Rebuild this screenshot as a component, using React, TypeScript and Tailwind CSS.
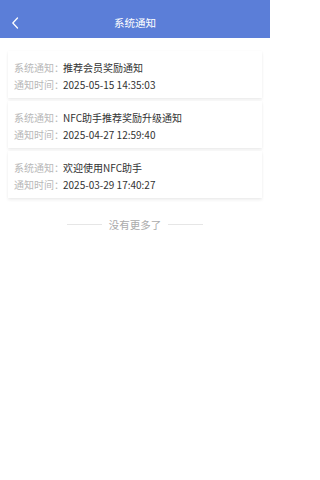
import React from "react";

const items = [
  { title: "推荐会员奖励通知", time: "2025-05-15 14:35:03" },
  { title: "NFC助手推荐奖励升级通知", time: "2025-04-27 12:59:40" },
  { title: "欢迎使用NFC助手", time: "2025-03-29 17:40:27" },
];

export default function App() {
  return (
    <div
      className="w-[270px] h-[480px] bg-white overflow-hidden"
      style={{ fontFamily: '"Noto Sans CJK SC", "Noto Sans", sans-serif' }}
    >
      <div className="h-[38px] bg-[#5b7ed8] pt-[8px]">
        <div className="relative h-[30px] flex items-center justify-center">
          <svg
            className="absolute left-[11px] top-[9px]"
            width="8"
            height="12"
            viewBox="0 0 8 12"
            fill="none"
          >
            <path d="M6.5 1 L1.8 6 L6.5 11" stroke="#ffffff" strokeWidth="1.3" strokeLinecap="round" strokeLinejoin="round" />
          </svg>
          <span className="text-[10.5px] text-white leading-none">系统通知</span>
        </div>
      </div>
      <div className="px-2 pt-[13px] flex flex-col gap-[3px]">
        {items.map((it) => (
          <div
            key={it.time}
            className="h-[47px] bg-white pt-[8px] pl-[6px] shadow-[0_2px_3px_rgba(0,0,0,0.07),0_0_2px_rgba(0,0,0,0.03)] text-[10px] whitespace-nowrap"
          >
            <div className="flex leading-[17px]">
              <span className="w-[49px] shrink-0 text-[#b8b8b8]">系统通知：</span>
              <span className="text-[#333333]">{it.title}</span>
            </div>
            <div className="flex leading-[17px]">
              <span className="w-[49px] shrink-0 text-[#b8b8b8]">通知时间：</span>
              <span className="text-[#333333]">{it.time}</span>
            </div>
          </div>
        ))}
      </div>
      <div className="mt-[18px] flex items-center justify-center gap-[7px]">
        <div className="w-[35px] h-px bg-[#e6e6e6]" />
        <span className="text-[10.5px] leading-[17px] text-[#ababab]">没有更多了</span>
        <div className="w-[35px] h-px bg-[#e6e6e6]" />
      </div>
    </div>
  );
}
